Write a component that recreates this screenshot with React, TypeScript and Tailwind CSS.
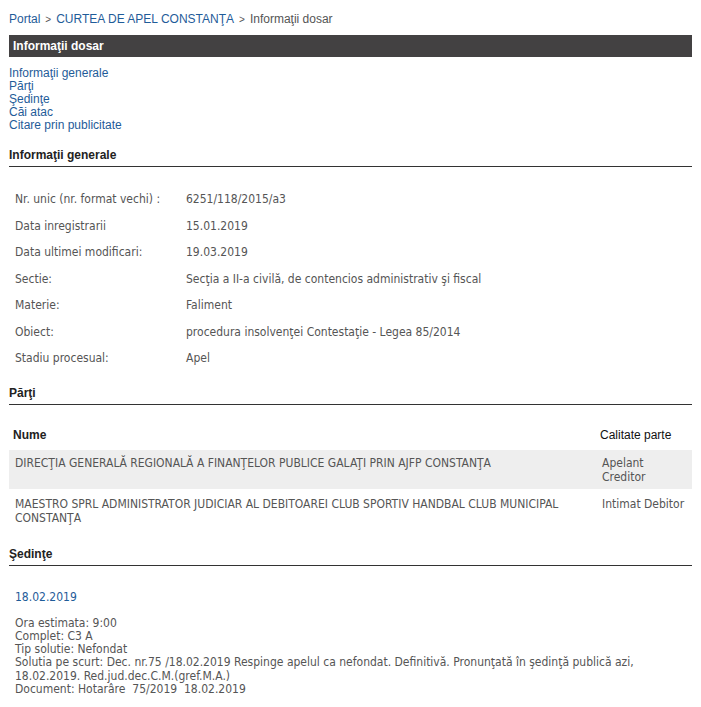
import React from "react";

const body = "font-['DejaVu_Sans_Condensed','DejaVu_Sans',sans-serif] text-[12px] text-[#555]";
const arial = "font-['Liberation_Sans',Arial,sans-serif]";

function SectionHead({ title, className = "" }: { title: string; className?: string }) {
  return (
    <div className={`${arial} text-[12px] font-bold text-[#222] border-b border-[#333] pb-[4px] leading-[14px] ${className}`}>
      {title}
    </div>
  );
}

const info: [string, string][] = [
  ["Nr. unic (nr. format vechi) :", "6251/118/2015/a3"],
  ["Data inregistrarii", "15.01.2019"],
  ["Data ultimei modificari:", "19.03.2019"],
  ["Sectie:", "Secţia a II-a civilă, de contencios administrativ şi fiscal"],
  ["Materie:", "Faliment"],
  ["Obiect:", "procedura insolvenţei Contestaţie - Legea 85/2014"],
  ["Stadiu procesual:", "Apel"],
];

export default function App() {
  return (
    <div className="bg-white w-[701px] min-h-[707px] pl-[9px] pr-[9px] pt-[12px]">
      <div className={`${arial} text-[12px] leading-[15px] text-[#555] flex items-baseline gap-[5px]`}>
        <span className="text-[#1f5c99]">Portal</span>
        <span className="text-[10px]">&gt;</span>
        <span className="text-[#1f5c99]">CURTEA DE APEL CONSTANŢA</span>
        <span className="text-[10px]">&gt;</span>
        <span>Informaţii dosar</span>
      </div>
      <div className={`${arial} mt-[8px] h-[22px] bg-[#434142] text-white font-bold text-[12px] leading-[22px] pl-[4px]`}>
        Informaţii dosar
      </div>
      <div className={`${arial} mt-[10px] flex flex-col text-[12px] leading-[13px] text-[#1f5c99]`}>
        <span>Informaţii generale</span>
        <span>Părţi</span>
        <span>Şedinţe</span>
        <span>Căi atac</span>
        <span>Citare prin publicitate</span>
      </div>

      <SectionHead title="Informaţii generale" className="mt-[16px]" />
      <div className={`${body} mt-[19px] flex flex-col`}>
        {info.map(([k, v]) => (
          <div key={k} className="flex h-[26.5px] items-center pl-[6px]">
            <div className="w-[171px] shrink-0">{k}</div>
            <div>{v}</div>
          </div>
        ))}
      </div>

      <SectionHead title="Părţi" className="mt-[14px]" />
      <div className="mt-[16px]">
        <div className={`${arial} flex text-[12px] font-bold text-[#222] h-[29px] items-center`}>
          <div className="flex-1 pl-[4px]">Nume</div>
          <div className="w-[92px] font-normal text-[#111]">Calitate parte</div>
        </div>
        <div className={`${body} flex bg-[#eeeeee] leading-[14px] pt-[6px] h-[39px]`}>
          <div className="flex-1 pl-[6px] pr-[20px]">DIRECŢIA GENERALĂ REGIONALĂ A FINANŢELOR PUBLICE GALAŢI PRIN AJFP CONSTANŢA</div>
          <div className="w-[92px] pl-[2px]">Apelant<br />Creditor</div>
        </div>
        <div className={`${body} flex leading-[14px] pt-[8px] h-[44px]`}>
          <div className="flex-1 pl-[6px] pr-[20px]">MAESTRO SPRL ADMINISTRATOR JUDICIAR AL DEBITOAREI CLUB SPORTIV HANDBAL CLUB MUNICIPAL CONSTANŢA</div>
          <div className="w-[92px] pl-[2px]">Intimat Debitor</div>
        </div>
      </div>

      <SectionHead title="Şedinţe" className="mt-[14px]" />
      <div className={`${body} pl-[6px] mt-[24px]`}>
        <div className="text-[#1f5c99] leading-[14px]">18.02.2019</div>
        <div className="mt-[13px] leading-[13.3px]">
          <div>Ora estimata: 9:00</div>
          <div>Complet: C3 A</div>
          <div>Tip solutie: Nefondat</div>
          <div className="pr-[40px]">Solutia pe scurt: Dec. nr.75 /18.02.2019 Respinge apelul ca nefondat. Definitivă. Pronunţată în şedinţă publică azi, 18.02.2019. Red.jud.dec.C.M.(gref.M.A.)</div>
          <div>Document: Hotarâre&nbsp;&nbsp;75/2019&nbsp;&nbsp;18.02.2019</div>
        </div>
      </div>
    </div>
  );
}
